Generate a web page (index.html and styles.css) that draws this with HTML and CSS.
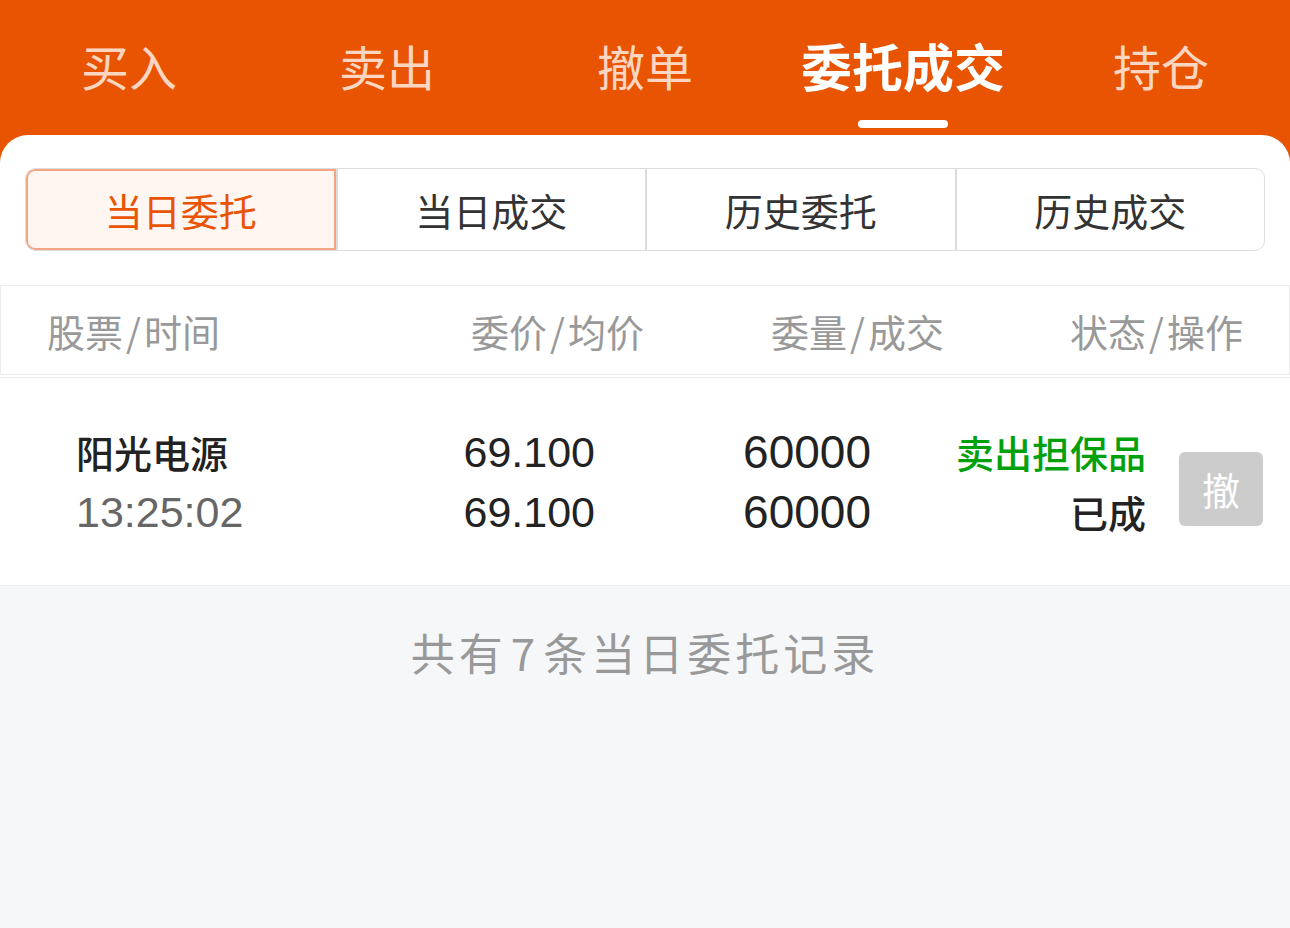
FILE: index.html
```html
<!DOCTYPE html>
<html lang="zh-CN">
<head>
  <meta charset="UTF-8" />
  <meta name="viewport" content="width=device-width, initial-scale=1.0"/>
  <title>委托成交</title>
  <link rel="stylesheet" href="styles.css">
</head>
<body>
  <div class="shell">
    <div class="tabs">
      <div class="tab">买入</div>
      <div class="tab">卖出</div>
      <div class="tab">撤单</div>
      <div class="tab active">委托成交</div>
      <div class="tab">持仓</div>
    </div>

    <div class="panel">
      <div class="seg">
        <div class="seg-item active">当日委托</div>
        <div class="seg-item">当日成交</div>
        <div class="seg-item">历史委托</div>
        <div class="seg-item">历史成交</div>
      </div>

      <div class="thead">
        <div>股票<span class="sl">/</span>时间</div>
        <div>委价<span class="sl">/</span>均价</div>
        <div>委量<span class="sl">/</span>成交</div>
        <div class="right">状态<span class="sl">/</span>操作</div>
      </div>

      <div class="trow">
        <div class="cell">
          <div class="name">阳光电源</div>
          <div class="time">13:25:02</div>
        </div>
        <div class="cell num">
          <div>69.100</div>
          <div>69.100</div>
        </div>
        <div class="cell num qty">
          <div>60000</div>
          <div>60000</div>
        </div>
        <div class="cell num">
          <div class="status green">卖出担保品</div>
          <div class="status">已成</div>
        </div>
        <button class="cancel-btn" disabled>撤</button>
      </div>
    </div>
  </div>

  <div class="footer">共有<span class="n">7</span>条当日委托记录</div>
</body>
</html>
```

FILE: styles.css
```css
body {
    margin: 0;
    padding: 0;
    background-color: #f6f7f9;
    font-family: "Noto Sans CJK SC", sans-serif;
    color: #222;
}
.shell {
    background-color: #e85402;
}
.tabs {
    display: flex;
    height: 135px;
}
.tab {
    flex: 1;
    position: relative;
    text-align: center;
    font-size: 48px;
    line-height: 48px;
    padding-top: 41px;
    color: #fcd6c1;
}
.tab.active {
    color: #fff;
    font-weight: bold;
    font-size: 51px;
}
.tab.active::after {
    content: "";
    position: absolute;
    left: 50%;
    bottom: 7px;
    width: 90px;
    height: 8px;
    margin-left: -45px;
    border-radius: 4px;
    background-color: #fff;
}
.panel {
    background-color: #fff;
    border-radius: 28px 28px 0 0;
    padding-top: 33px;
}
.seg {
    display: grid;
    grid-template-columns: repeat(4, 1fr);
    margin: 0 25px;
    height: 81px;
    border: 1px solid #dedede;
    border-radius: 10px;
    overflow: hidden;
}
.seg-item {
    display: flex;
    align-items: center;
    justify-content: center;
    font-size: 38px;
    color: #333;
    border-left: 2px solid #dcdcdc;
}
.seg-item:first-child {
    border-left: none;
}
.seg-item.active {
    color: #e85402;
    background-color: #fff5f1;
    box-shadow: inset 0 0 0 2px #f4a684;
    border-radius: 9px 0 0 9px;
}
.thead {
    display: grid;
    grid-template-columns: 424px 300px 1fr auto;
    align-items: center;
    margin-top: 34px;
    height: 88px;
    padding: 0 46px;
    border: 1px solid #ececec;
    font-size: 38px;
    color: #999;
}
.thead .sl {
    margin: 0 3px;
}
.thead .right {
    text-align: right;
}
.trow {
    display: grid;
    grid-template-columns: 320px 199px 276px 275px 84px;
    align-items: center;
    height: 207px;
    padding: 0 27px 0 76px;
    border-top: 1px solid #ececec;
    margin-top: 2px;
    border-bottom: 1px solid #ececec;
}
.cell {
    line-height: 60px;
    font-family: "Liberation Sans", "Noto Sans CJK SC", sans-serif;
    font-size: 43px;
    color: #222;
}
.cell.num {
    text-align: right;
}
.cell.qty {
    font-size: 46px;
}
.name {
    font-family: "Noto Sans CJK SC", sans-serif;
    font-size: 38px;
    font-weight: 500;
}
.time {
    color: #666;
}
.status {
    font-family: "Noto Sans CJK SC", sans-serif;
    font-size: 38px;
    font-weight: 500;
}
.green {
    color: #02a10c;
}
.cancel-btn {
    margin-left: 33px;
    width: 84px;
    height: 74px;
    margin-top: 14px;
    border: none;
    border-radius: 6px;
    background-color: #cccccc;
    color: #fff;
    font-family: "Noto Sans CJK SC", sans-serif;
    font-size: 38px;
    padding: 0;
}
.footer {
    text-align: center;
    padding-top: 38px;
    font-size: 44px;
    line-height: 56px;
    letter-spacing: 4px;
    color: #999;
}
.footer .n {
    margin: 0 4px;
}
```
